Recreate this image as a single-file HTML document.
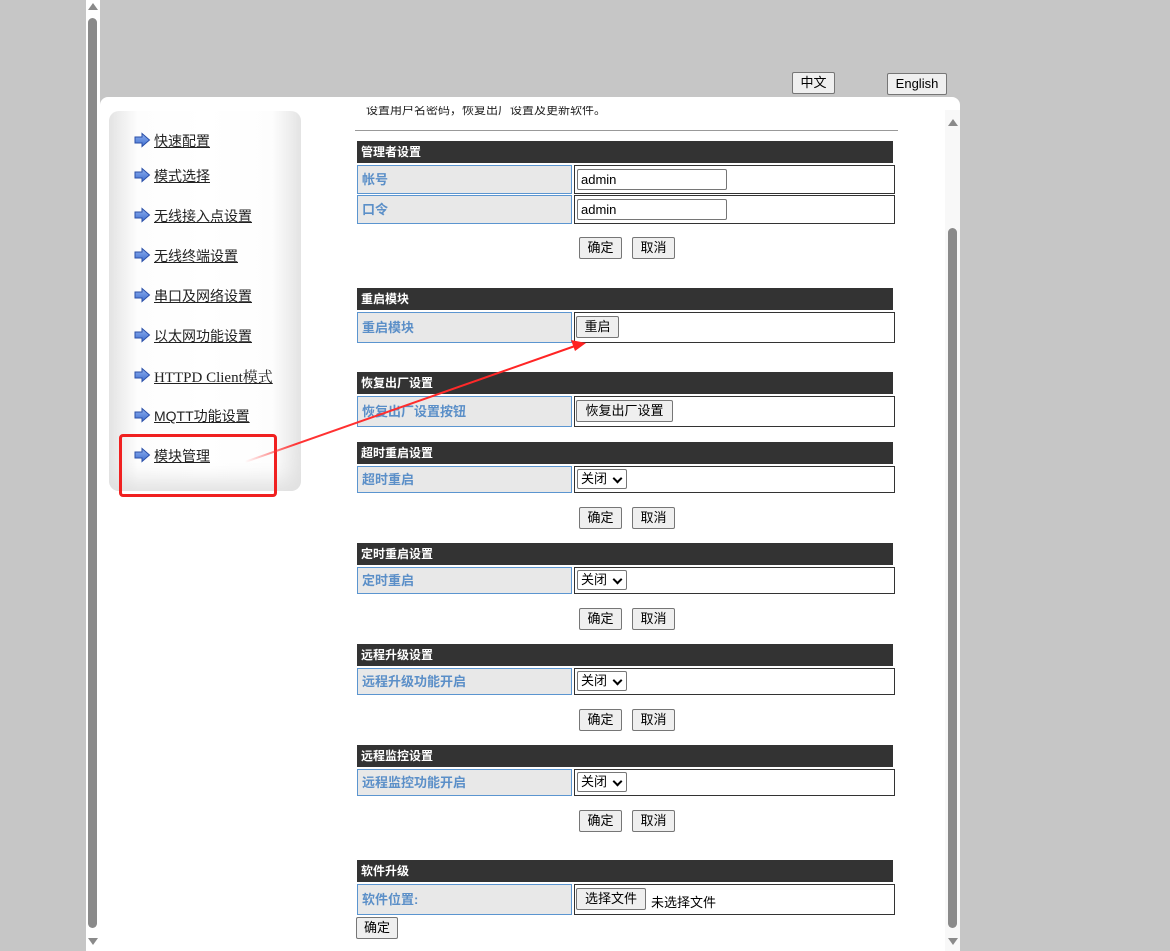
<!DOCTYPE html>
<html><head><meta charset="utf-8"><style>
*{box-sizing:border-box;margin:0;padding:0}
body{width:1170px;height:951px;overflow:hidden;position:relative;background:#c6c6c6;font-family:"Liberation Sans","Noto Sans CJK SC",sans-serif;font-size:13px;color:#000}
.a{position:absolute}
.btn{position:absolute;height:22px;border:1px solid #767676;border-radius:2px;background:#efefef;font-size:13px;line-height:20px;text-align:center}
.hd{position:absolute;left:357px;width:536px;height:22px;background:#333;color:#fff;font-weight:bold;font-size:12px;line-height:22px;padding-left:4px}
.lb{position:absolute;left:357px;width:215px;background:#e8e8e8;border:1px solid #5b95d0;color:#5b8fc8;font-weight:bold;font-size:13px;padding-left:4px}
.vl{position:absolute;left:574px;width:321px;border:1px solid #333;background:#fff}
.sel{position:absolute;left:2px;top:2px;width:50px;height:20px;border:1px solid #767676;border-radius:2px;font-size:13px;line-height:18px;padding-left:3px;background:#fff}
.sel:after{content:"";position:absolute;right:5px;top:5px;width:5px;height:5px;border-right:2px solid #000;border-bottom:2px solid #000;transform:rotate(45deg)}
.mi{position:absolute;left:134px;font-size:14px;color:#222;text-decoration:underline}
.mi svg{position:absolute;left:0;top:1px}
.mi span{margin-left:20px}
</style></head><body>
<div class="a" style="left:86px;top:0;width:14px;height:951px;background:#fff"></div>
<div class="a" style="left:88px;top:18px;width:9px;height:910px;background:#8a8a8a;border-radius:5px"></div>
<div class="a" style="left:88px;top:3px;width:0;height:0;border-left:5px solid transparent;border-right:5px solid transparent;border-bottom:7px solid #8a8a8a"></div>
<div class="a" style="left:88px;top:938px;width:0;height:0;border-left:5px solid transparent;border-right:5px solid transparent;border-top:7px solid #8a8a8a"></div>
<div class="btn" style="left:792px;top:72px;width:43px">中文</div>
<div class="btn" style="left:887px;top:73px;width:60px">English</div>
<div class="a" style="left:100px;top:97px;width:860px;height:854px;background:#fff;border-radius:8px 8px 0 0"></div>
<div class="a" style="left:945px;top:110px;width:15px;height:841px;background:#f8f8f8"></div>
<div class="a" style="left:948px;top:228px;width:9px;height:700px;background:#8a8a8a;border-radius:5px"></div>
<div class="a" style="left:948px;top:119px;width:0;height:0;border-left:5px solid transparent;border-right:5px solid transparent;border-bottom:7px solid #8a8a8a"></div>
<div class="a" style="left:948px;top:938px;width:0;height:0;border-left:5px solid transparent;border-right:5px solid transparent;border-top:7px solid #8a8a8a"></div>
<div class="a" style="left:109px;top:111px;width:192px;height:380px;border-radius:10px;background:linear-gradient(to right,#e4e4e4,#fdfdfd 15%,#fff 50%,#fdfdfd 85%,#e4e4e4);box-shadow:inset 0 -20px 20px -10px #e0e0e0"></div>
<svg width="0" height="0" style="position:absolute"><defs><linearGradient id="g" x1="0" y1="0" x2="0" y2="1"><stop offset="0" stop-color="#8fb0ef"/><stop offset="1" stop-color="#3f6fd0"/></linearGradient></defs></svg>
<div class="mi" style="top:131px"><svg width="17" height="16"><path d="M1 5h7V1.5l7.5 6.5-7.5 6.5V11H1z" fill="url(#g)" stroke="#2a4fa8"/></svg><span>快速配置</span></div>
<div class="mi" style="top:166px"><svg width="17" height="16"><path d="M1 5h7V1.5l7.5 6.5-7.5 6.5V11H1z" fill="url(#g)" stroke="#2a4fa8"/></svg><span>模式选择</span></div>
<div class="mi" style="top:206px"><svg width="17" height="16"><path d="M1 5h7V1.5l7.5 6.5-7.5 6.5V11H1z" fill="url(#g)" stroke="#2a4fa8"/></svg><span>无线接入点设置</span></div>
<div class="mi" style="top:246px"><svg width="17" height="16"><path d="M1 5h7V1.5l7.5 6.5-7.5 6.5V11H1z" fill="url(#g)" stroke="#2a4fa8"/></svg><span>无线终端设置</span></div>
<div class="mi" style="top:286px"><svg width="17" height="16"><path d="M1 5h7V1.5l7.5 6.5-7.5 6.5V11H1z" fill="url(#g)" stroke="#2a4fa8"/></svg><span>串口及网络设置</span></div>
<div class="mi" style="top:326px"><svg width="17" height="16"><path d="M1 5h7V1.5l7.5 6.5-7.5 6.5V11H1z" fill="url(#g)" stroke="#2a4fa8"/></svg><span>以太网功能设置</span></div>
<div class="mi" style="top:366px;font-family:'Liberation Serif','Noto Serif CJK SC',serif;font-size:15px"><svg width="17" height="16"><path d="M1 5h7V1.5l7.5 6.5-7.5 6.5V11H1z" fill="url(#g)" stroke="#2a4fa8"/></svg><span>HTTPD Client模式</span></div>
<div class="mi" style="top:406px"><svg width="17" height="16"><path d="M1 5h7V1.5l7.5 6.5-7.5 6.5V11H1z" fill="url(#g)" stroke="#2a4fa8"/></svg><span>MQTT功能设置</span></div>
<div class="mi" style="top:446px"><svg width="17" height="16"><path d="M1 5h7V1.5l7.5 6.5-7.5 6.5V11H1z" fill="url(#g)" stroke="#2a4fa8"/></svg><span>模块管理</span></div>
<div class="a" style="left:119px;top:434px;width:158px;height:63px;border:3px solid #f02020;border-radius:4px"></div>
<div class="a" style="left:366px;top:106px;font-size:12px;color:#222;height:12px;overflow:hidden;line-height:8px">设置用户名密码，恢复出厂设置及更新软件。</div>
<div class="a" style="left:355px;top:130px;width:543px;height:1px;background:#999"></div>
<div class="hd" style="top:141px">管理者设置</div>
<div class="lb" style="top:165px;height:29px;line-height:27px">帐号</div>
<div class="vl" style="top:165px;height:29px"><div class="a" style="left:2px;top:3px;width:150px;height:21px;border:1px solid #767676;border-radius:2px;padding-left:3px;line-height:19px;font-size:13px">admin</div></div>
<div class="lb" style="top:195px;height:29px;line-height:27px">口令</div>
<div class="vl" style="top:195px;height:29px"><div class="a" style="left:2px;top:3px;width:150px;height:21px;border:1px solid #767676;border-radius:2px;padding-left:3px;line-height:19px;font-size:13px">admin</div></div>
<div class="btn" style="left:579px;top:237px;width:43px">确定</div>
<div class="btn" style="left:632px;top:237px;width:43px">取消</div>
<div class="hd" style="top:288px">重启模块</div>
<div class="lb" style="top:312px;height:31px;line-height:29px">重启模块</div>
<div class="vl" style="top:312px;height:31px"><div class="btn" style="left:1px;top:3px;width:43px">重启</div></div>
<div class="hd" style="top:372px">恢复出厂设置</div>
<div class="lb" style="top:396px;height:31px;line-height:29px">恢复出厂设置按钮</div>
<div class="vl" style="top:396px;height:31px"><div class="btn" style="left:1px;top:3px;width:97px">恢复出厂设置</div></div>
<div class="hd" style="top:442px">超时重启设置</div>
<div class="lb" style="top:466px;height:27px;line-height:25px">超时重启</div>
<div class="vl" style="top:466px;height:27px"><div class="sel">关闭</div></div>
<div class="btn" style="left:579px;top:507px;width:43px">确定</div>
<div class="btn" style="left:632px;top:507px;width:43px">取消</div>
<div class="hd" style="top:543px">定时重启设置</div>
<div class="lb" style="top:567px;height:27px;line-height:25px">定时重启</div>
<div class="vl" style="top:567px;height:27px"><div class="sel">关闭</div></div>
<div class="btn" style="left:579px;top:608px;width:43px">确定</div>
<div class="btn" style="left:632px;top:608px;width:43px">取消</div>
<div class="hd" style="top:644px">远程升级设置</div>
<div class="lb" style="top:668px;height:27px;line-height:25px">远程升级功能开启</div>
<div class="vl" style="top:668px;height:27px"><div class="sel">关闭</div></div>
<div class="btn" style="left:579px;top:709px;width:43px">确定</div>
<div class="btn" style="left:632px;top:709px;width:43px">取消</div>
<div class="hd" style="top:745px">远程监控设置</div>
<div class="lb" style="top:769px;height:27px;line-height:25px">远程监控功能开启</div>
<div class="vl" style="top:769px;height:27px"><div class="sel">关闭</div></div>
<div class="btn" style="left:579px;top:810px;width:43px">确定</div>
<div class="btn" style="left:632px;top:810px;width:43px">取消</div>
<div class="hd" style="top:860px">软件升级</div>
<div class="lb" style="top:884px;height:31px;line-height:29px">软件位置:</div>
<div class="vl" style="top:884px;height:31px"><div class="btn" style="left:1px;top:3px;width:70px">选择文件</div><div class="a" style="left:76px;top:7px;font-size:13px">未选择文件</div></div>
<div class="btn" style="left:356px;top:917px;width:42px">确定</div>
<svg class="a" style="left:0;top:0" width="1170" height="951"><defs><linearGradient id="ra" x1="245" y1="462" x2="585" y2="343" gradientUnits="userSpaceOnUse"><stop offset="0" stop-color="#f33" stop-opacity="0"/><stop offset="0.15" stop-color="#f33"/><stop offset="1" stop-color="#f22"/></linearGradient></defs><line x1="245" y1="462" x2="575" y2="346" stroke="url(#ra)" stroke-width="2"/><path d="M586 343L571 340L575 351z" fill="#f22"/></svg>
</body></html>
